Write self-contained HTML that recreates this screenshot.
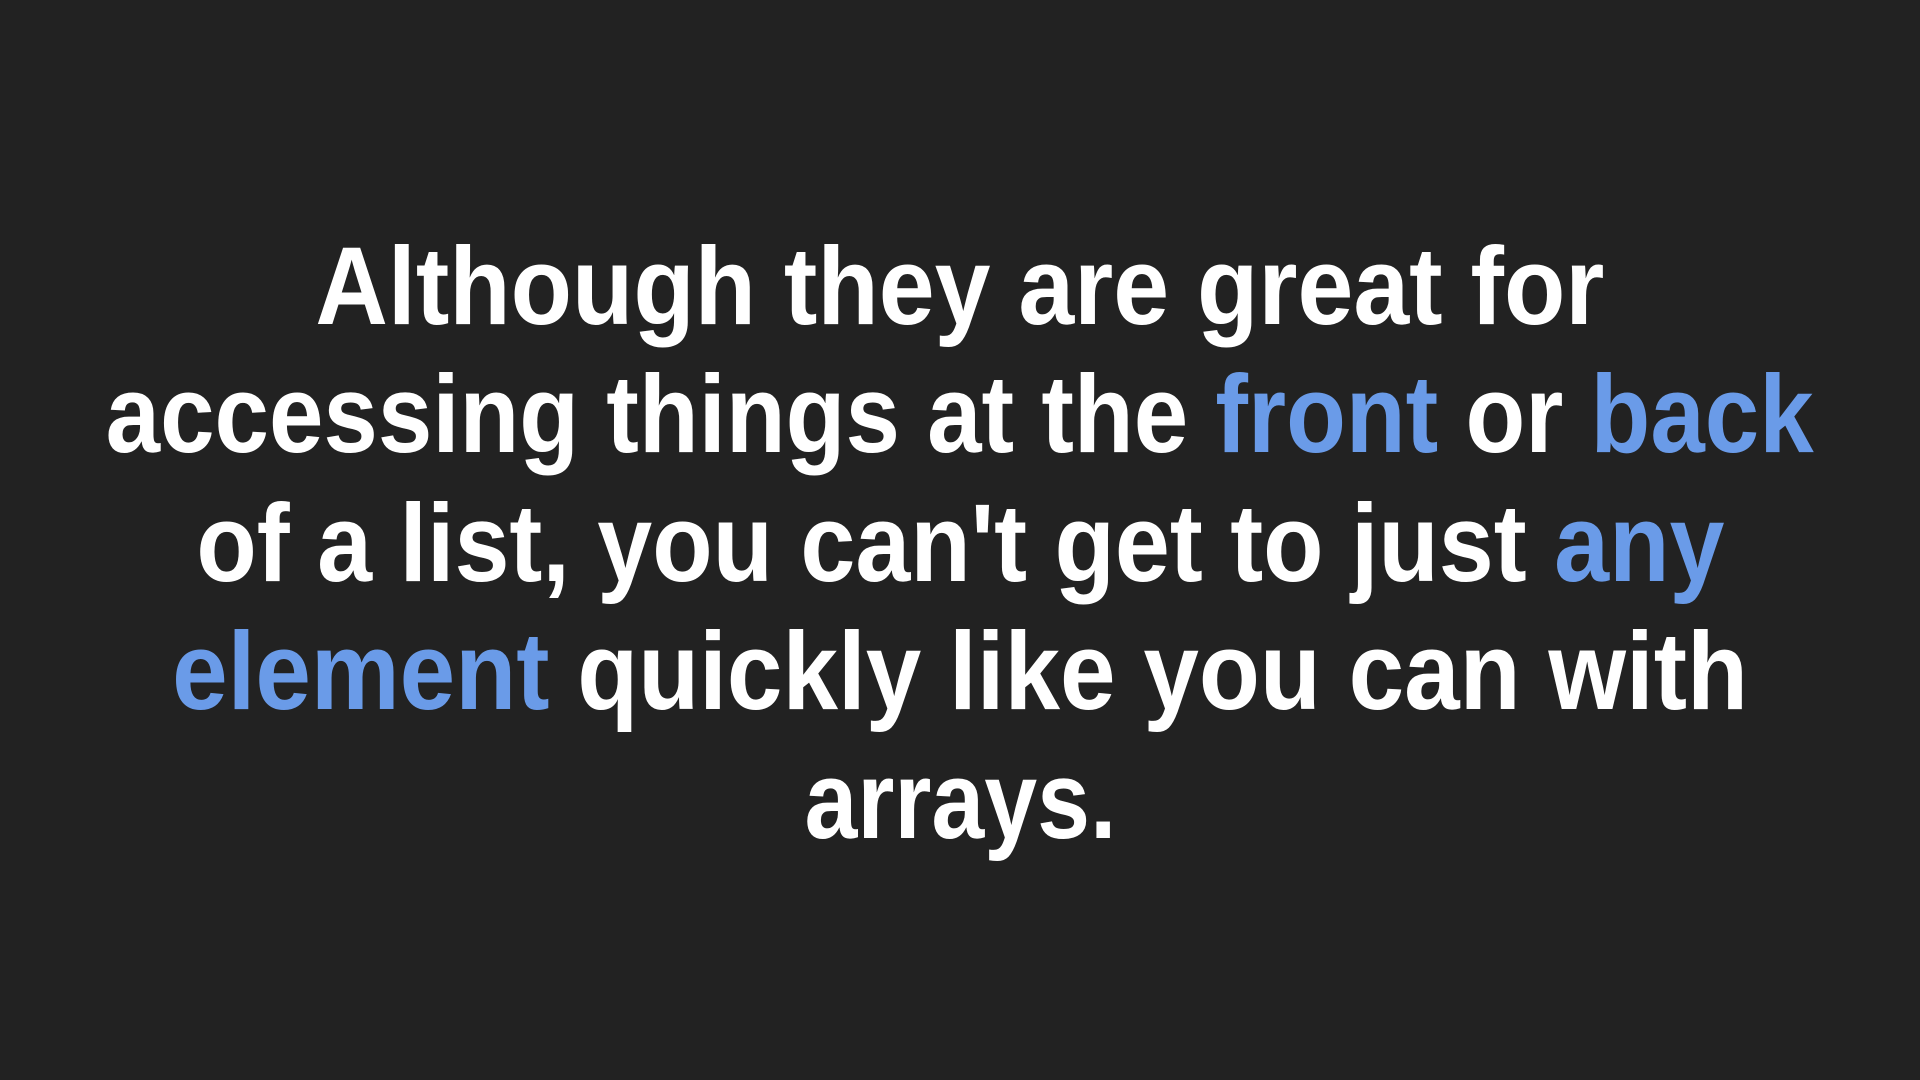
<!DOCTYPE html>
<html><head><meta charset="utf-8"><style>
html,body{margin:0;padding:0;background:#222222;width:1920px;height:1080px;overflow:hidden}
.l{position:absolute;left:0;width:1920px;text-align:center;font-family:"Liberation Sans",sans-serif;font-weight:bold;font-size:110px;line-height:110px;color:#fff;white-space:nowrap}
.l span.i{display:inline-block;transform-origin:center}
.b{color:#6a9be8}
</style></head><body>
<div class="l" style="top:232px"><span class="i" data-w="1289">Although they are great for</span></div>
<div class="l" style="top:360px"><span class="i" data-w="1708">accessing things at the <span class="b">front</span> or <span class="b">back</span></span></div>
<div class="l" style="top:489px"><span class="i" data-w="1528">of a list, you can't get to just <span class="b">any</span></span></div>
<div class="l" style="top:617px"><span class="i" data-w="1576"><span class="b">element</span> quickly like you can with</span></div>
<div class="l" style="top:746px"><span class="i" data-w="312">arrays.</span></div>
<script>
document.querySelectorAll('.i').forEach(function(e){
var w=e.getBoundingClientRect().width;var t=+e.getAttribute('data-w');
e.style.transform='scaleX('+(t/w)+')';});
</script>
</body></html>
